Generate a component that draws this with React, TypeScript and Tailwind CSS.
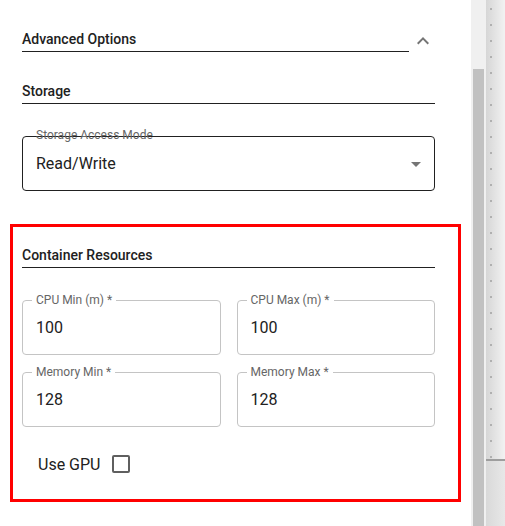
const dots = Array.from({ length: 29 }, (_, i) => i);

const fields = [
  { id: 'cpuMin', label: 'CPU Min (m) *', value: '100' },
  { id: 'cpuMax', label: 'CPU Max (m) *', value: '100' },
  { id: 'memMin', label: 'Memory Min *', value: '128' },
  { id: 'memMax', label: 'Memory Max *', value: '128' },
];

const SectionTitle = ({ title }: { title: string }) => (
  <div className="border-b border-[#212121] pb-[2px] text-[14px] font-medium leading-[20px] text-[#212121]">
    {title}
  </div>
);

export default function App() {
  return (
    <div className="flex h-[526px] w-[505px] overflow-hidden bg-white font-['Roboto',sans-serif]">
      {/* Form column */}
      <div className="w-[471px] shrink-0 pl-[22px] pr-[36px]">
        {/* Advanced options header */}
        <div className="mt-[29px] flex items-start gap-[2px]">
          <div className="flex-1">
            <SectionTitle title="Advanced Options" />
          </div>
          <svg viewBox="0 0 24 24" className="h-6 w-6 shrink-0" fill="#757575">
            <path d="M12 8l-6 6 1.41 1.41L12 10.83l4.59 4.58L18 14z" />
          </svg>
        </div>

        <div className="mt-[28px]">
          <SectionTitle title="Storage" />
        </div>

        {/* Storage access mode select */}
        <div className="relative mt-[32px] flex h-[55px] items-center rounded-[4px] border border-[#212121] pl-[13px] pr-[6px]">
          <span className="absolute left-[13px] top-[-9px] text-[12px] leading-[14px] text-[#666666]">
            Storage Access Mode
          </span>
          <span className="flex-1 text-[16px] leading-[19px] text-[#212121]">Read/Write</span>
          <svg viewBox="0 0 24 24" className="h-6 w-6" fill="#757575">
            <path d="M7 10l5 5 5-5z" />
          </svg>
        </div>

        {/* Container resources (highlighted) */}
        <div className="-ml-[12px] -mr-[26px] mt-[33px] border-[3px] border-[#ff0000] pb-[23px] pl-[9px] pr-[23px]">
          <div className="mt-[18px]">
            <SectionTitle title="Container Resources" />
          </div>

          <div className="mt-[32px] grid grid-cols-2 gap-x-[16px] gap-y-[17px]">
            {fields.map((f) => (
              <div
                key={f.id}
                className="relative flex h-[55px] items-center rounded-[4px] border border-[#c4c4c4] pl-[13px]"
              >
                <span className="absolute left-[9px] top-[-8px] bg-white px-[4px] text-[12px] leading-[14px] text-[#666666]">
                  {f.label}
                </span>
                <span className="text-[16px] leading-[19px] text-[#212121]">{f.value}</span>
              </div>
            ))}
          </div>

          <div className="mt-[25px] flex h-[24px] items-center pl-[16px]">
            <span className="text-[16px] leading-[19px] text-[#212121]">Use GPU</span>
            <div className="ml-[12px] h-[18px] w-[18px] rounded-[2px] border-2 border-[#5f5f5f]" />
          </div>
        </div>
      </div>

      {/* Scrollbar */}
      <div className="w-[15px] shrink-0 bg-[#f0f0f0] px-[2px] pt-[69px]">
        <div className="h-full bg-[#c1c1c1]" />
      </div>

      {/* Side panel */}
      <div className="flex flex-1 flex-col">
        <div className="h-[461px] border-b-2 border-[#9e9e9e] bg-gradient-to-r from-[#d6d6d6] to-[#f2f2f2] pl-[4px] pt-[8px]">
          <div className="flex flex-col gap-[14px]">
            {dots.map((d) => (
              <div key={d} className="h-[2px] w-[2px] bg-[#b0b0b0]" />
            ))}
          </div>
        </div>
        <div className="flex-1 bg-gradient-to-r from-[#d9d9d9] to-[#e8e8e8]" />
      </div>
    </div>
  );
}
